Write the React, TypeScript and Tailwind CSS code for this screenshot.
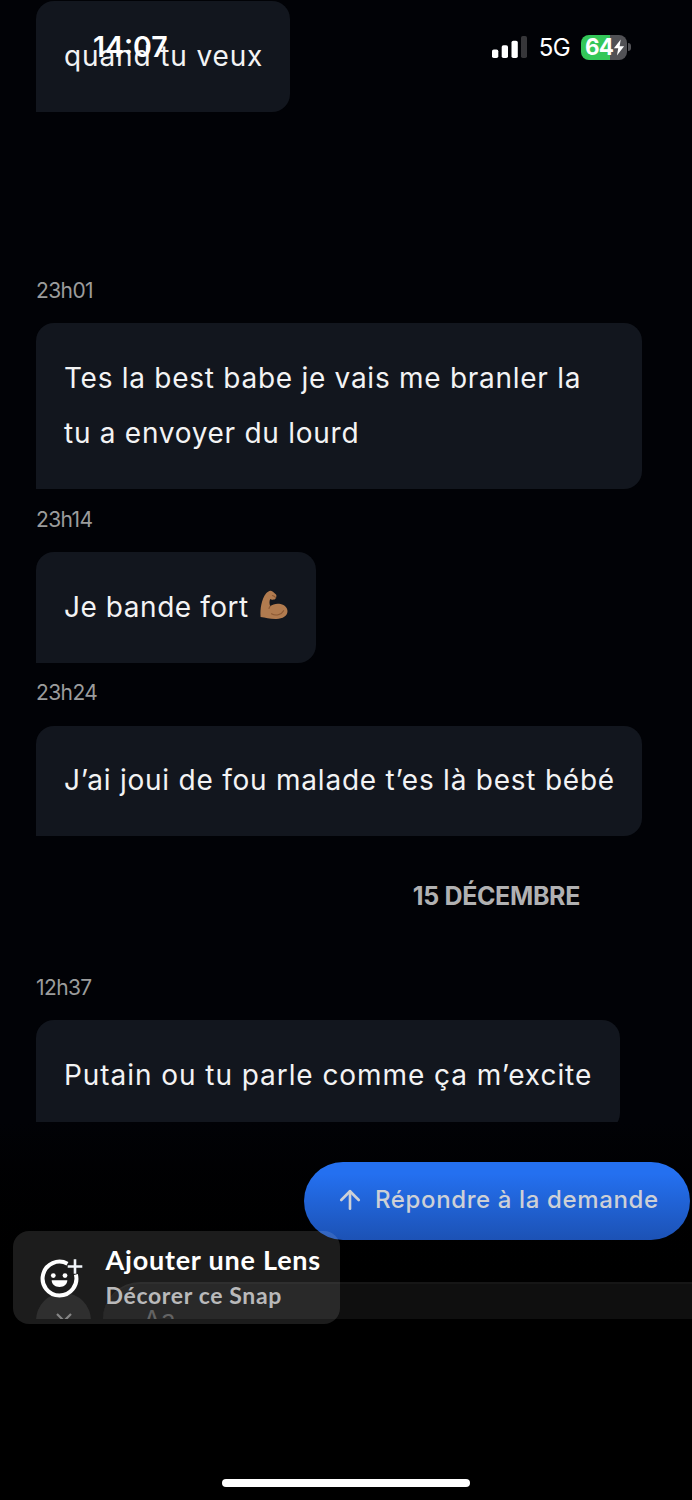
import { ReactNode } from 'react';
import { ArrowUp } from 'lucide-react';

interface Message {
  id: number;
  time?: string;
  lines: string[];
  width: string;
  tracking: string;
  emoji?: boolean;
}

const firstMessage: Message = {
  id: 1,
  lines: ['quand tu veux'],
  width: 'w-[254px]',
  tracking: 'tracking-[0.87px]',
};

const messages: Message[] = [
  {
    id: 2,
    time: '23h01',
    lines: ['Tes la best babe je vais me branler la', 'tu a envoyer du lourd'],
    width: 'w-[606px]',
    tracking: 'tracking-[0.73px]',
  },
  {
    id: 3,
    time: '23h14',
    lines: ['Je bande fort'],
    width: 'w-[280px]',
    tracking: 'tracking-[0.55px]',
    emoji: true,
  },
  {
    id: 4,
    time: '23h24',
    lines: ['J’ai joui de fou malade t’es là best bébé'],
    width: 'w-[606px]',
    tracking: 'tracking-[0.77px]',
  },
];

const lastMessage: Message = {
  id: 5,
  time: '12h37',
  lines: ['Putain ou tu parle comme ça m’excite'],
  width: 'w-[584px]',
  tracking: 'tracking-[0.94px]',
};

function FlexedArm() {
  return (
    <svg viewBox="0 0 28 30" className="mb-[3px] ml-[11px] h-[30px] w-7 shrink-0">
      <path
        d="M0.6 27C0 19 1.4 9.500 6 3.600C7.200 2 9.200 0.500 10.800 0.700C12.400 1.200 14.800 3.200 16 4.600C16.700 5.600 16.500 7 15.800 7.700C15.700 9 14.700 9.700 13.500 9.500C12.300 10 11 9.700 10.200 9.100C9.200 11.500 9.300 13.700 10.200 16.200C12.700 14 17 13.200 20.600 14C24.800 14.900 27.500 17.700 27.500 21.300C27.400 26 22.700 28.800 16.500 29C10.500 29.200 5.500 27.700 0.600 27Z"
        fill="#b17b4f"
      />
      <path
        d="M11.500 23.800C15.800 26.200 21.300 25 23.600 20.700M12.500 5.600C13.700 6 14.800 6.700 15.700 7.600M10.200 16.200C9.600 17 9.200 17.800 9 18.500"
        fill="none"
        stroke="#8a5834"
        strokeWidth="1.1"
        strokeLinecap="round"
      />
    </svg>
  );
}

function Bubble({ message }: { message: Message }) {
  return (
    <div
      className={`${message.width} rounded-[18px] rounded-bl-none bg-[#12161e] px-7 pt-[27px] pb-7 text-[28px] leading-none text-[#f3f3f4]`}
    >
      {message.lines.map((line) => (
        <div key={line} className="flex h-[55.5px] items-center whitespace-nowrap">
          <span className={message.tracking}>{line}</span>
          {message.emoji && <FlexedArm />}
        </div>
      ))}
    </div>
  );
}

function Timestamp({ children }: { children: ReactNode }) {
  return (
    <div className="flex h-[63px] items-center pb-[3px] text-[21px] leading-none tracking-[-0.6px] text-[#9b9c9c]">
      {children}
    </div>
  );
}

function StatusBar() {
  return (
    <div className="absolute inset-x-0 top-0 z-10 flex h-[94px] items-center justify-between pr-[61px] pl-[93px] text-white">
      <span className="text-[28.5px] font-semibold">14:07</span>
      <div className="flex items-center">
        <svg viewBox="0 0 35 22" className="mr-3 h-[22px] w-[35px]">
          <rect x="0" y="13.500" width="6.300" height="8.500" rx="1.800" fill="#fff" />
          <rect x="9.700" y="9.300" width="6.300" height="12.700" rx="1.800" fill="#fff" />
          <rect x="19.500" y="4.700" width="6.300" height="17.300" rx="1.800" fill="#fff" />
          <rect x="29" y="0" width="6" height="22" rx="1.800" fill="#363639" />
        </svg>
        <span className="mr-[11px] pt-[2px] text-[24px] tracking-[-0.6px]">5G</span>
        <div className="relative flex h-[25px] w-[46px] items-center rounded-[8px] bg-linear-to-r from-[#34c759] from-[63%] to-[#515155] to-[63%]">
          <span className="ml-[4px] text-[22.5px] leading-none font-bold tracking-[-0.8px]">64</span>
          <svg viewBox="0 0 12 18" className="absolute right-[2px] h-[17px] w-3">
            <path d="M7.800 0.500L0.600 9.800H5.200L3.800 17.500L11.400 7.700H6.700Z" fill="#fff" />
          </svg>
        </div>
        <div className="ml-[1px] h-2 w-[3px] rounded-r-full bg-[#515155]" />
      </div>
    </div>
  );
}

function LensIcon() {
  return (
    <svg viewBox="0 0 44 40" className="h-10 w-11 shrink-0" fill="none">
      <path d="M27.500 5.700A16.900 16.900 0 1 0 35.900 16.500" stroke="#fff" strokeWidth="4" />
      <path d="M35 1.200V15.800M27.700 8.500H42.300" stroke="#f1f5fa" strokeWidth="2.600" />
      <circle cx="13.300" cy="17.600" r="2.400" fill="#fff" />
      <circle cx="25" cy="17.600" r="2.400" fill="#fff" />
      <path d="M11.700 22.300H27.300C27.300 26.300 24 29 19.500 29C15 29 11.700 26.300 11.700 22.300Z" fill="#fff" />
    </svg>
  );
}

function LensCard() {
  return (
    <div className="absolute top-[109px] left-[13px] flex h-[93px] w-[327px] items-center rounded-[16px] bg-white/[0.11] pl-[27px]">
      <LensIcon />
      <div className="ml-[21.5px] font-[Lato] whitespace-nowrap">
        <div className="text-[27px] leading-[36px] font-bold tracking-[0.78px] text-white">Ajouter une Lens</div>
        <div className="text-[23px] leading-[35px] font-bold tracking-[0.65px] text-[#b9b9ba]">Décorer ce Snap</div>
      </div>
    </div>
  );
}

export default function App() {
  return (
    <div className="relative flex h-[1500px] w-[692px] flex-col overflow-hidden bg-[#010206] font-[Inter,sans-serif]">
      <StatusBar />

      <main className="h-[1122px] shrink-0 overflow-hidden pt-px pl-9">
        <Bubble message={firstMessage} />
        <div className="h-[148.5px]" />
        {messages.map((message) => (
          <div key={message.id}>
            <Timestamp>{message.time}</Timestamp>
            <Bubble message={message} />
          </div>
        ))}
        <div className="flex h-[121px] items-center justify-end pr-[112px] text-[25px] font-bold tracking-[-0.35px] text-[#b1b1b2]">
          <span>15 DÉCEMBRE</span>
        </div>
        <Timestamp>{lastMessage.time}</Timestamp>
        <Bubble message={lastMessage} />
      </main>

      <footer className="relative flex flex-1 flex-col bg-black">
        <div className="flex h-[197px] flex-col overflow-hidden bg-linear-to-b from-[#010206] to-black">
          <button className="mt-10 mr-[2px] flex h-[78px] w-[386px] shrink-0 items-center self-end rounded-full bg-linear-to-b from-[#2470f0] from-15% to-[#1c52b5] pb-[2px] pl-[31px] text-[24px] font-medium text-[#cdd0d6]">
            <ArrowUp className="mr-[10px] size-[30px]" strokeWidth={2.1} />
            <span className="tracking-[0.62px] whitespace-nowrap">Répondre à la demande</span>
          </button>
          <div className="mt-[42px] flex h-[37px] shrink-0 pl-9">
            <div className="mt-[11px] flex size-[55px] shrink-0 justify-center rounded-full bg-[#161616]">
              <svg viewBox="0 0 16 16" className="mt-5 size-4" fill="none" stroke="#777" strokeWidth="2.200">
                <path d="M1 1L8 8L15 1M8 8L1 15M8 8L15 15" />
              </svg>
            </div>
            <div className="ml-3 h-[74px] flex-1 rounded-l-full border-t-2 border-[#161616] bg-[#0f0f0f] pt-[20px] pl-[40px] text-[26px] leading-[32px] text-[#505050]">
              Aa
            </div>
          </div>
        </div>
        <LensCard />
        <div className="mt-auto mb-[13px] h-2 w-[248px] self-center rounded-full bg-white" />
      </footer>
    </div>
  );
}
